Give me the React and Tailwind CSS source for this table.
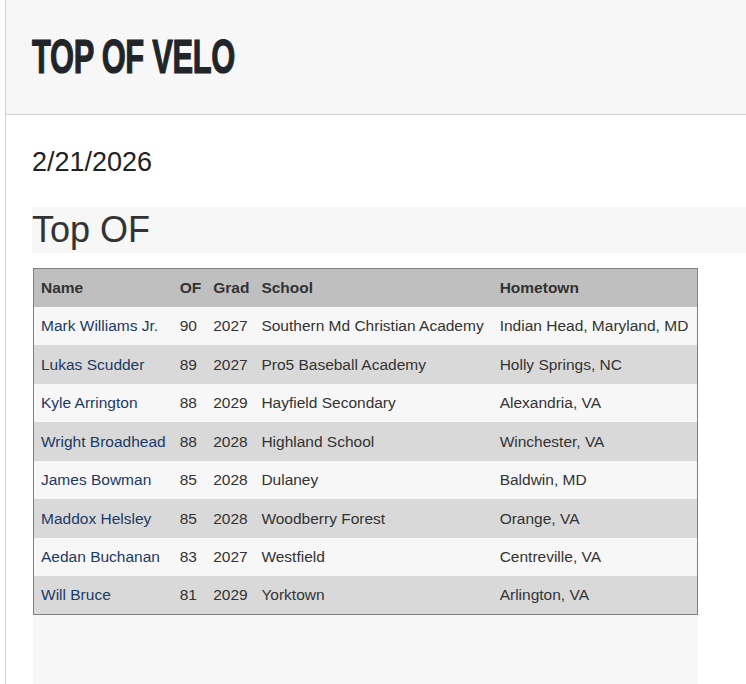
import React from 'react';

const players = [
  { name: 'Mark Williams Jr.', of: 90, grad: 2027, school: 'Southern Md Christian Academy', hometown: 'Indian Head, Maryland, MD' },
  { name: 'Lukas Scudder', of: 89, grad: 2027, school: 'Pro5 Baseball Academy', hometown: 'Holly Springs, NC' },
  { name: 'Kyle Arrington', of: 88, grad: 2029, school: 'Hayfield Secondary', hometown: 'Alexandria, VA' },
  { name: 'Wright Broadhead', of: 88, grad: 2028, school: 'Highland School', hometown: 'Winchester, VA' },
  { name: 'James Bowman', of: 85, grad: 2028, school: 'Dulaney', hometown: 'Baldwin, MD' },
  { name: 'Maddox Helsley', of: 85, grad: 2028, school: 'Woodberry Forest', hometown: 'Orange, VA' },
  { name: 'Aedan Buchanan', of: 83, grad: 2027, school: 'Westfield', hometown: 'Centreville, VA' },
  { name: 'Will Bruce', of: 81, grad: 2029, school: 'Yorktown', hometown: 'Arlington, VA' },
];

const App = () => {
  return (
    <div className="min-h-[684px] bg-white font-['Liberation_Sans',Arial,sans-serif]">
      <div className="ml-[5px] min-h-[684px] border-l border-[#d0d0d0]">
        {/* header */}
        <div className="h-[115px] bg-[#f7f7f7] border-b border-[#d0d0d0] pl-[26px] pt-[28px]">
          <h1 className="inline-block origin-left scale-x-[0.63] text-[49px] leading-[56px] font-bold tracking-[-0.5px] text-[#212529] [-webkit-text-stroke:1.2px_#212529]">
            TOP OF VELO
          </h1>
        </div>

        <div className="pl-[26px]">
          <div className="pt-[31px] text-[27px] leading-[32px] text-[#222]">2/21/2026</div>

          <div className="mt-[29px] h-[46px] bg-[#f7f7f7] text-[36px] leading-[46px] text-[#333]">Top OF</div>

          {/* table */}
          <div className="mt-[15px] ml-px w-fit bg-[#f7f7f7] pb-[80px]">
            <table className="border-collapse border border-[#808080] text-[15.5px] text-[#333]">
              <thead>
                <tr className="h-[38px] bg-[#bfbfbf] text-left">
                  <th className="px-[7px] font-bold">Name</th>
                  <th className="pl-[7px] pr-[6px] font-bold">OF</th>
                  <th className="px-[6px] font-bold">Grad</th>
                  <th className="pl-[6px] pr-[9px] font-bold">School</th>
                  <th className="pl-[7px] pr-[9px] font-bold">Hometown</th>
                </tr>
              </thead>
              <tbody>
                {players.map((p, i) => (
                  <tr key={p.name} className={`h-[38.5px] ${i % 2 === 0 ? 'bg-[#f7f7f7]' : 'bg-[#d9d9d9]'}`}>
                    <td className="px-[7px] whitespace-nowrap text-[#1b3a66]">{p.name}</td>
                    <td className="pl-[7px] pr-[6px]">{p.of}</td>
                    <td className="px-[6px]">{p.grad}</td>
                    <td className="pl-[6px] pr-[9px] whitespace-nowrap">{p.school}</td>
                    <td className="pl-[7px] pr-[9px] whitespace-nowrap">{p.hometown}</td>
                  </tr>
                ))}
              </tbody>
            </table>
          </div>
        </div>
      </div>
    </div>
  );
};

export default App;
